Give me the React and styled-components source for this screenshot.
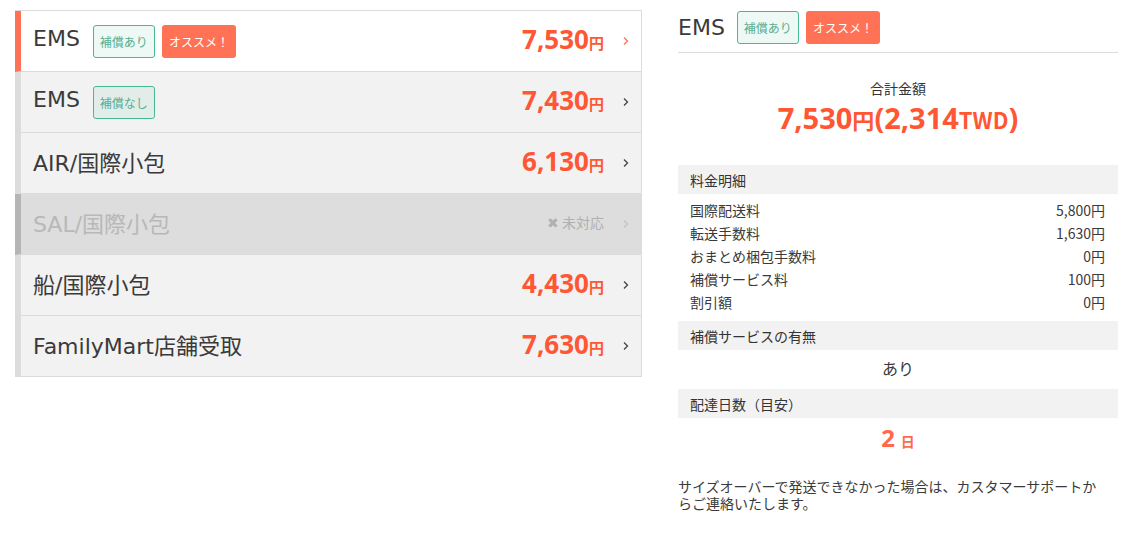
import styled, { createGlobalStyle } from "styled-components";

const GlobalStyle = createGlobalStyle`
  body {
    margin: 0;
    background: #fff;
    color: #333;
    font-family: "DejaVu Sans", "Noto Sans CJK JP", sans-serif;
  }
`;

const methods = [
  { name: "EMS", price: "7,530", badges: ["補償あり", "オススメ！"], selected: true },
  { name: "EMS", price: "7,430", badges: ["補償なし"] },
  { name: "AIR/国際小包", price: "6,130" },
  { name: "SAL/国際小包", disabled: true },
  { name: "船/国際小包", price: "4,430" },
  { name: "FamilyMart店舗受取", price: "7,630" },
];

const details = [
  ["国際配送料", "5,800円"],
  ["転送手数料", "1,630円"],
  ["おまとめ梱包手数料", "0円"],
  ["補償サービス料", "100円"],
  ["割引額", "0円"],
];

function Chevron({ color }) {
  return (
    <svg width="6" height="10" viewBox="0 0 6 10">
      <polyline points="1,1.5 4.5,5 1,8.5" fill="none" stroke={color} strokeWidth="1.3" />
    </svg>
  );
}

function Badge({ label }) {
  return label === "オススメ！" ? <Recommend>{label}</Recommend> : <Insurance>{label}</Insurance>;
}

function App() {
  return (
    <Page>
      <GlobalStyle />
      <List>
        {methods.map((m, i) => (
          <Row key={i} $selected={m.selected} $disabled={m.disabled}>
            <Name>{m.name}</Name>
            {m.badges && (
              <Badges>
                {m.badges.map((b) => (
                  <Badge key={b} label={b} />
                ))}
              </Badges>
            )}
            <Spacer />
            {m.disabled ? (
              <Unsupported>✖ 未対応</Unsupported>
            ) : (
              <Price>
                {m.price}
                <small>円</small>
              </Price>
            )}
            <ChevronBox>
              <Chevron color={m.selected ? "#ff7256" : m.disabled ? "#c4c4c4" : "#444"} />
            </ChevronBox>
          </Row>
        ))}
      </List>

      <Detail>
        <TitleRow>
          <Title>EMS</Title>
          <Badges>
            <Badge label="補償あり" />
            <Badge label="オススメ！" />
          </Badges>
        </TitleRow>

        <TotalLabel>合計金額</TotalLabel>
        <Total>
          7,530<small>円</small>(2,314<small>TWD</small>)
        </Total>

        <SectionHead>料金明細</SectionHead>
        <Lines>
          {details.map(([k, v]) => (
            <Line key={k}>
              <span>{k}</span>
              <span>{v}</span>
            </Line>
          ))}
        </Lines>

        <SectionHead>補償サービスの有無</SectionHead>
        <Answer>あり</Answer>

        <SectionHead>配達日数（目安）</SectionHead>
        <Days>
          2<small>日</small>
        </Days>

        <Note>サイズオーバーで発送できなかった場合は、カスタマーサポートからご連絡いたします。</Note>
      </Detail>
    </Page>
  );
}

const Page = styled.div`
  display: flex;
  align-items: flex-start;
  gap: 36px;
  padding: 10px 15px;
`;

const List = styled.div`
  width: 627px;
  flex: none;
  border-top: 1px solid #dcdcdc;
  border-right: 1px solid #dcdcdc;
  box-sizing: border-box;
`;

const Badges = styled.div`
  display: flex;
  gap: 7px;
  margin-left: 13px;
`;

const ChevronBox = styled.div`
  display: flex;
  margin-left: 19px;
`;

const Row = styled.div`
  display: flex;
  align-items: center;
  box-sizing: border-box;
  height: 61px;
  padding: 0 12px 5px 12px;
  border-left: 6px solid
    ${(p) => (p.$selected ? "#ff7256" : p.$disabled ? "#b5b5b5" : "#dcdcdc")};
  border-bottom: 1px solid #dcdcdc;
  background: ${(p) => (p.$selected ? "#fff" : p.$disabled ? "#dddddd" : "#f2f2f2")};
  color: ${(p) => (p.$disabled ? "#b8b8b8" : "#3a3a3a")};
  ${Badges}, ${ChevronBox} {
    margin-top: 5px;
  }
`;

const Name = styled.div`
  font-size: 22px;
`;

const BadgeBase = styled.span`
  display: inline-flex;
  align-items: center;
  height: 33px;
  box-sizing: border-box;
  padding: 0 6px;
  border-radius: 3px;
  font-family: "Noto Sans CJK JP", sans-serif;
  font-size: 12px;
`;

const Insurance = styled(BadgeBase)`
  border: 1px solid #48b990;
  background: rgba(72, 185, 144, 0.09);
  color: #58ae90;
`;

const Recommend = styled(BadgeBase)`
  padding: 0 7px;
  background: #ff7256;
  color: #fff;
`;

const Spacer = styled.div`
  flex: 1;
`;

const Price = styled.div`
  font-family: "Noto Sans", sans-serif;
  font-weight: 700;
  font-size: 26px;
  color: #ff5733;
  small {
    font-family: "Noto Sans CJK JP", sans-serif;
    font-size: 15px;
    font-weight: 700;
  }
`;

const Unsupported = styled.div`
  font-family: "Noto Sans CJK JP", sans-serif;
  font-size: 14px;
  color: #b0b0b0;
`;

const Detail = styled.div`
  width: 440px;
  flex: none;
`;

const TitleRow = styled.div`
  display: flex;
  align-items: center;
  padding: 1px 0 8px;
  border-bottom: 1px solid #dcdcdc;
  ${Badges} {
    margin-left: 12px;
  }
`;

const Title = styled.div`
  font-size: 22px;
  color: #3a3a3a;
`;

const TotalLabel = styled.div`
  margin-top: 25px;
  text-align: center;
  font-family: "Noto Sans CJK JP", sans-serif;
  font-size: 14px;
  line-height: 20px;
`;

const Total = styled.div`
  margin-bottom: 26px;
  text-align: center;
  font-family: "Noto Sans", "Noto Sans CJK JP", sans-serif;
  font-weight: 700;
  font-size: 29px;
  line-height: 40px;
  color: #ff5733;
  small {
    font-size: 22px;
    font-family: "Noto Sans CJK JP", sans-serif;
  }
`;

const SectionHead = styled.div`
  padding: 0 12px;
  height: 29px;
  display: flex;
  align-items: center;
  background: #f2f2f2;
  font-family: "Noto Sans CJK JP", sans-serif;
  font-size: 14px;
  color: #333;
`;

const Lines = styled.div`
  padding: 5px 13px 7px 12px;
`;

const Line = styled.div`
  display: flex;
  justify-content: space-between;
  font-family: "Noto Sans CJK JP", sans-serif;
  font-size: 14px;
  line-height: 23px;
  color: #3a3a3a;
`;

const Answer = styled.div`
  padding: 6px 0 9px;
  text-align: center;
  font-family: "Noto Sans CJK JP", sans-serif;
  font-size: 16px;
  line-height: 24px;
  color: #3a3a3a;
`;

const Days = styled.div`
  padding: 6px 0 10px;
  text-align: center;
  font-family: "Noto Sans", "Noto Sans CJK JP", sans-serif;
  font-weight: 700;
  font-size: 24px;
  line-height: 28px;
  color: #ff6a4d;
  small {
    margin-left: 6px;
    font-size: 14px;
  }
`;

const Note = styled.p`
  margin: 12px 0 0;
  padding-right: 14px;
  font-family: "Noto Sans CJK JP", sans-serif;
  font-size: 14px;
  line-height: 17px;
  color: #3a3a3a;
`;

export default App;
